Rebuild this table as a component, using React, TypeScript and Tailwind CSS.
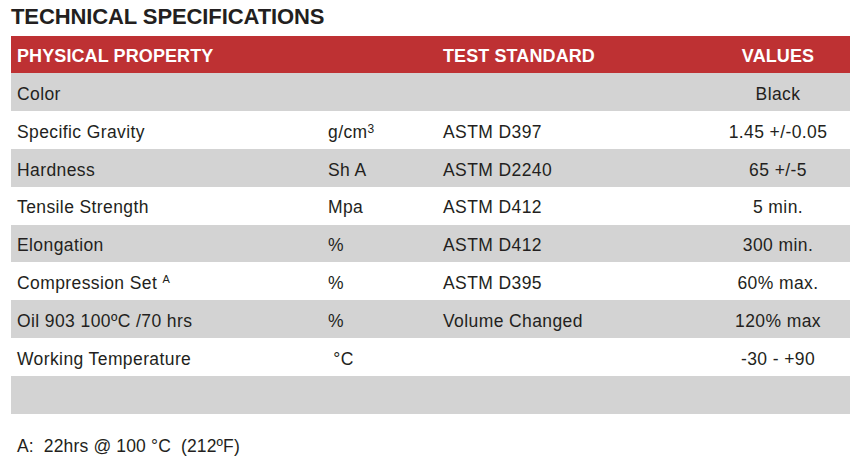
import React from "react";

type Row = { p: React.ReactNode; u: React.ReactNode; t: string; v: string };

const rows: Row[] = [
  { p: "Color", u: "", t: "", v: "Black" },
  { p: "Specific Gravity", u: <>g/cm<span className="text-[12px] align-[5px]">3</span></>, t: "ASTM D397", v: "1.45 +/-0.05" },
  { p: "Hardness", u: "Sh A", t: "ASTM D2240", v: "65 +/-5" },
  { p: "Tensile Strength", u: "Mpa", t: "ASTM D412", v: "5 min." },
  { p: "Elongation", u: "%", t: "ASTM D412", v: "300 min." },
  { p: <>Compression Set <span className="text-[11px] align-[6px]">A</span></>, u: "%", t: "ASTM D395", v: "60% max." },
  { p: "Oil 903 100ºC /70 hrs", u: "%", t: "Volume Changed", v: "120% max" },
  { p: "Working Temperature", u: "\u00a0°C", t: "", v: "-30 - +90" },
  { p: "", u: "", t: "", v: "" },
];

export default function App() {
  return (
    <div className="w-[861px] h-[470px] bg-white text-[#231f20]" style={{ fontFamily: '"Liberation Sans", Arial, sans-serif' }}>
      <div className="pt-[4px] pl-[11px] text-[22px] font-bold leading-[26px] h-[36px] tracking-[-0.1px]">TECHNICAL SPECIFICATIONS</div>
      <div className="ml-[11px] w-[839px]">
        <div className="grid grid-cols-[311px_115px_269px_144px] h-[37px] pt-[3px] items-center bg-[#be3133] text-white font-bold text-[18px] tracking-[0.1px]">
          <div className="pl-[6px]">PHYSICAL PROPERTY</div>
          <div></div>
          <div className="pl-[6px]">TEST STANDARD</div>
          <div className="text-center">VALUES</div>
        </div>
        {rows.map((r, i) => (
          <div
            key={i}
            className={`grid grid-cols-[311px_115px_269px_144px] h-[37.9px] pt-[4px] items-center text-[17.5px] tracking-[0.4px] ${i % 2 === 0 ? "bg-[#d3d3d3]" : "bg-white"}`}
          >
            <div className="pl-[6px] whitespace-pre">{r.p}</div>
            <div className="pl-[6px] whitespace-pre">{r.u}</div>
            <div className="pl-[6px]">{r.t}</div>
            <div className="text-center">{r.v}</div>
          </div>
        ))}
      </div>
      <div className="pl-[17px] mt-[19px] text-[17.5px] tracking-[0.15px] whitespace-pre">A:  22hrs @ 100 °C  (212ºF)</div>
    </div>
  );
}
